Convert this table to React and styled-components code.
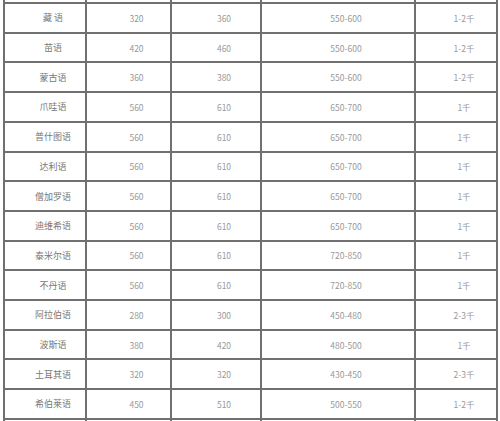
import React from "react";
import styled, { createGlobalStyle } from "styled-components";

const Global = createGlobalStyle`
  html, body { margin: 0; padding: 0; background: #fff; }
  body { overflow: hidden; }
`;

const Page = styled.div`
  width: 500px;
  height: 421px;
  overflow: hidden;
  background: #fff;
  padding-left: 3px;
  box-sizing: border-box;
`;

const Table = styled.div`
  display: grid;
  width: max-content;
  grid-template-columns: 80px 83px 88px 152px 80px;
  grid-template-rows: 2px repeat(14, 27.714px) 4px;
  gap: 2px;
  padding: 0 2px;
  background: #707070;
`;

const Cell = styled.div`
  background: #fff;
  display: flex;
  align-items: center;
  justify-content: center;
  padding-left: 16px;
  box-sizing: border-box;
  font-family: "Noto Sans CJK SC", "Liberation Sans", sans-serif;
  font-size: ${(p) => (p.$num ? "8.5px" : "9px")};
  color: ${(p) => (p.$num ? "#999999" : "#777777")};
  white-space: pre;
  overflow: hidden;
`;

const rows = [
  ["藏 语", "320", "360", "550-600", "1-2千"],
  ["苗语", "420", "460", "550-600", "1-2千"],
  ["蒙古语", "360", "380", "550-600", "1-2千"],
  ["爪哇语", "560", "610", "650-700", "1千"],
  ["普什图语", "560", "610", "650-700", "1千"],
  ["达利语", "560", "610", "650-700", "1千"],
  ["僧加罗语", "560", "610", "650-700", "1千"],
  ["迪维希语", "560", "610", "650-700", "1千"],
  ["泰米尔语", "560", "610", "720-850", "1千"],
  ["不丹语", "560", "610", "720-850", "1千"],
  ["阿拉伯语", "280", "300", "450-480", "2-3千"],
  ["波斯语", "380", "420", "480-500", "1千"],
  ["土耳其语", "320", "320", "430-450", "2-3千"],
  ["希伯莱语", "450", "510", "500-550", "1-2千"],
];

const blank = ["", "", "", "", ""];

export default function App() {
  return (
    <Page>
      <Global />
      <Table>
        {blank.map((_, i) => (
          <Cell key={`t${i}`} />
        ))}
        {rows.map((r, ri) =>
          r.map((v, ci) => (
            <Cell key={`${ri}-${ci}`} $num={ci > 0}>
              {v}
            </Cell>
          ))
        )}
        {blank.map((_, i) => (
          <Cell key={`b${i}`} />
        ))}
      </Table>
    </Page>
  );
}
